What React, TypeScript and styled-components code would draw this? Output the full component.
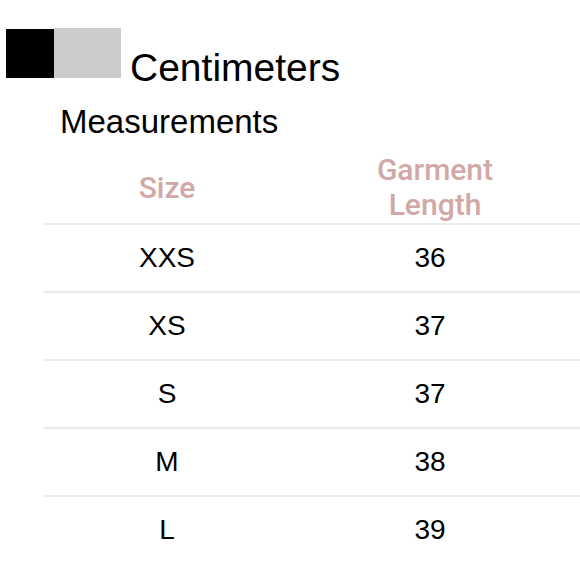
import { Fragment } from 'react';
import styled, { createGlobalStyle } from 'styled-components';

const GlobalStyle = createGlobalStyle`
  html, body {
    margin: 0;
    padding: 0;
    background: #ffffff;
    overflow: hidden;
  }
`;

const Page = styled.div`
  width: 580px;
  height: 580px;
  padding-top: 28px;
  box-sizing: border-box;
  font-family: "Liberation Sans", Arial, sans-serif;
  color: #000000;
`;

const UnitBar = styled.div`
  display: flex;
  align-items: flex-end;
  padding-left: 6px;
`;

const Swatch = styled.div<{ $color: string; $w: number; $h: number }>`
  width: ${(p) => p.$w}px;
  height: ${(p) => p.$h}px;
  background: ${(p) => p.$color};
`;

const UnitLabel = styled.span`
  font-size: 39px;
  line-height: 39px;
  margin-left: 9px;
  margin-bottom: -9px;
`;

const SectionTitle = styled.h2`
  margin: 0;
  padding-left: 60px;
  padding-top: 25px;
  font-size: 33px;
  font-weight: 400;
  line-height: 38px;
`;

const Table = styled.div`
  margin-left: 44px;
  width: 536px;
  margin-top: 10px;
  display: grid;
  grid-template-columns: 246px 290px;
`;

const HeadCell = styled.div`
  height: 72px;
  display: flex;
  align-items: center;
  justify-content: center;
  text-align: center;
  font-family: Roboto, "Liberation Sans", sans-serif;
  font-size: 30px;
  font-weight: 500;
  line-height: 35px;
  color: #d1a8a6;
  border-bottom: 2px solid #ececec;
`;

const Cell = styled.div<{ $last?: boolean; $shift?: number }>`
  height: 66px;
  display: flex;
  align-items: center;
  justify-content: center;
  padding-right: ${(p) => p.$shift ?? 0}px;
  font-size: 28px;
  border-bottom: ${(p) => (p.$last ? 'none' : '2px solid #ececec')};
`;

const rows = [
  { size: 'XXS', length: 36 },
  { size: 'XS', length: 37 },
  { size: 'S', length: 37 },
  { size: 'M', length: 38 },
  { size: 'L', length: 39 },
];

export default function App() {
  return (
    <>
      <GlobalStyle />
      <Page>
        <UnitBar>
          <Swatch $color="#000000" $w={48} $h={49} />
          <Swatch $color="#cccccc" $w={67} $h={50} />
          <UnitLabel>Centimeters</UnitLabel>
        </UnitBar>
        <SectionTitle>Measurements</SectionTitle>
        <Table>
          <HeadCell>Size</HeadCell>
          <HeadCell>
            Garment
            <br />
            Length
          </HeadCell>
          {rows.map((r, i) => (
            <Fragment key={r.size}>
              <Cell $last={i === rows.length - 1}>{r.size}</Cell>
              <Cell $last={i === rows.length - 1} $shift={10}>
                {r.length}
              </Cell>
            </Fragment>
          ))}
        </Table>
      </Page>
    </>
  );
}
